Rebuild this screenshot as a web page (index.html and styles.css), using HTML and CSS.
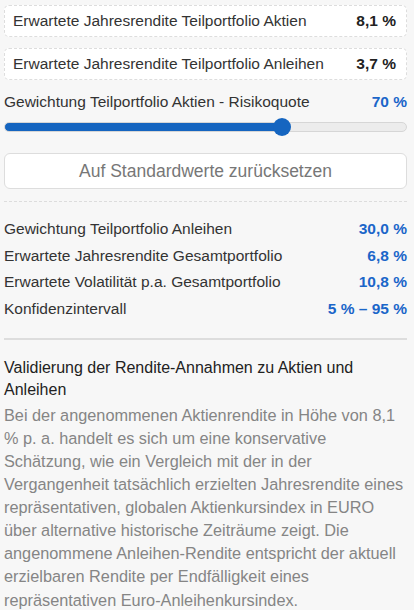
FILE: index.html
```html
<!DOCTYPE html>
<html lang="de">
<head>
    <meta charset="UTF-8">
    <meta name="viewport" content="width=device-width, initial-scale=1.0">
    <title>Portfolio Rechner</title>
    <link rel="stylesheet" href="styles.css">
</head>
<body>
    <div id="calculator">
        <div class="input-card">
            <span>Erwartete Jahresrendite Teilportfolio Aktien</span>
            <span class="input-value">8,1 %</span>
        </div>
        <div class="input-card">
            <span>Erwartete Jahresrendite Teilportfolio Anleihen</span>
            <span class="input-value">3,7 %</span>
        </div>

        <div class="slider-label">
            <span>Gewichtung Teilportfolio Aktien - Risikoquote</span>
            <span class="result">70 %</span>
        </div>
        <input type="range" id="quoteSlider" min="0" max="100" value="70" style="--fill: 70%">

        <button id="resetBtn">Auf Standardwerte zurücksetzen</button>

        <div class="results">
            <div class="result-row">
                <span>Gewichtung Teilportfolio Anleihen</span>
                <span class="result">30,0 %</span>
            </div>
            <div class="result-row">
                <span>Erwartete Jahresrendite Gesamtportfolio</span>
                <span class="result">6,8 %</span>
            </div>
            <div class="result-row">
                <span>Erwartete Volatilität p.a. Gesamtportfolio</span>
                <span class="result">10,8 %</span>
            </div>
            <div class="result-row">
                <span>Konfidenzintervall</span>
                <span class="result">5 % – 95 %</span>
            </div>
        </div>

        <h3>Validierung der Rendite-Annahmen zu Aktien und Anleihen</h3>
        <p>
            Bei der angenommenen Aktienrendite in Höhe von 8,1 % p. a. handelt es sich um eine konservative
            Schätzung, wie ein Vergleich mit der in der Vergangenheit tatsächlich erzielten Jahresrendite eines
            repräsentativen, globalen Aktienkursindex in EURO über alternative historische Zeiträume zeigt.
            Die angenommene Anleihen-Rendite entspricht der aktuell erzielbaren Rendite per Endfälligkeit eines
            repräsentativen Euro-Anleihenkursindex.
        </p>
    </div>
</body>
</html>
```

FILE: styles.css
```css
body {
    margin: 0;
    background-color: #f7f7f7;
    font-family: "Liberation Sans", Arial, sans-serif;
    font-size: 15.5px;
    color: #333;
}

#calculator {
    padding: 5px 7px 0 4px;
    display: flex;
    flex-direction: column;
}

.input-card {
    display: flex;
    justify-content: space-between;
    align-items: center;
    height: 30px;
    padding: 0 10px 0 8px;
    margin-bottom: 11px;
    background-color: white;
    border: 1px dashed #ddd;
    border-radius: 5px;
}

.input-value {
    font-weight: bold;
    color: #222;
}

.slider-label {
    display: flex;
    justify-content: space-between;
    margin-top: 1px;
    line-height: 20px;
}

.result {
    font-weight: bold;
    color: #1b66c9;
}

input[type=range] {
    -webkit-appearance: none;
    appearance: none;
    margin: 6px 0 0 0;
    width: 100%;
    height: 18px;
    background: transparent;
}

input[type=range]::-webkit-slider-runnable-track {
    height: 10px;
    border-radius: 5px;
    border: 1px solid #d6d6d6;
    box-sizing: border-box;
    background: linear-gradient(to right, #1565c0 var(--fill), #ececec var(--fill));
}

input[type=range]::-webkit-slider-thumb {
    -webkit-appearance: none;
    width: 18px;
    height: 18px;
    margin-top: -5px;
    border-radius: 50%;
    background-color: #1565c0;
    border: none;
}

#resetBtn {
    margin-top: 17px;
    height: 36px;
    background-color: white;
    border: 1px solid #ddd;
    border-radius: 6px;
    color: #777;
    font-family: inherit;
    font-size: 17.5px;
    cursor: pointer;
}

.results {
    margin-top: 12px;
    padding-top: 14px;
    padding-bottom: 15px;
    border-top: 1px dashed #ddd;
    border-bottom: 2px solid #ddd;
}

.result-row {
    display: flex;
    justify-content: space-between;
    line-height: 26.7px;
}

h3 {
    margin: 17px 0 0 0;
    font-size: 16px;
    font-weight: normal;
    line-height: 22px;
    color: #222;
}

p {
    margin: 3px 0 0 0;
    font-size: 16.3px;
    line-height: 23.1px;
    color: #858585;
}
```
